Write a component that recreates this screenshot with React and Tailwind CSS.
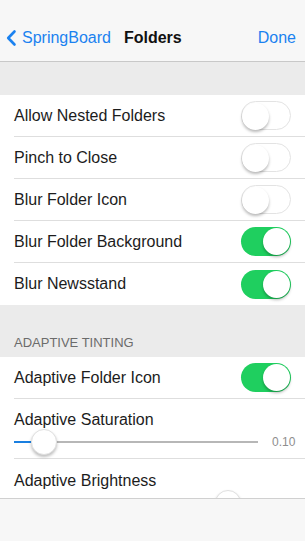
const font = { fontFamily: '"Liberation Sans", Arial, sans-serif' };

function Chevron() {
  return (
    <svg width="12" height="18" viewBox="0 0 12 18" className="shrink-0">
      <path
        d="M9.5 2.5 L3.2 9 L9.5 15.5"
        fill="none"
        stroke="#1b82f0"
        strokeWidth="2.6"
        strokeLinecap="round"
        strokeLinejoin="round"
      />
    </svg>
  );
}

function Toggle({ on }) {
  return (
    <div
      className={
        'relative h-[29px] w-[50px] shrink-0 rounded-full ' +
        (on ? 'bg-[#1fcf5f]' : 'border border-[#e3e3e3] bg-white')
      }
    >
      <div
        className={
          'absolute top-[1px] h-[27px] w-[27px] rounded-full bg-white shadow-[0_2px_3px_rgba(0,0,0,0.28)] ' +
          (on ? 'right-[1px]' : 'left-0 top-0')
        }
      />
    </div>
  );
}

function Row({ label, on, last }) {
  return (
    <div className="pl-[14px]">
      <div
        className={
          'flex h-[42px] items-center justify-between pr-[14px] ' +
          (last ? '' : 'border-b border-[#dedede]')
        }
      >
        <span className="text-[16px] text-[#1c1c1c]">{label}</span>
        <Toggle on={on} />
      </div>
    </div>
  );
}

function Slider({ pos, label }) {
  return (
    <div className="flex items-center pr-[11px]">
      <div className="relative h-[26px] flex-1">
        <div className="absolute left-0 right-0 top-[12px] h-[2px] bg-[#b7b7b7]" />
        <div
          className="absolute left-0 top-[12px] h-[2px] bg-[#1a7fe0]"
          style={{ width: pos }}
        />
        <div
          className="absolute top-0 h-[26px] w-[26px] rounded-full border border-[#e0e0e0] bg-white shadow-[0_2px_3px_rgba(0,0,0,0.25)]"
          style={{ left: pos - 13 }}
        />
      </div>
      {label && (
        <span className="ml-[14px] w-[22px] text-right text-[12px] text-[#8e8e8e]">{label}</span>
      )}
    </div>
  );
}

export default function App() {
  return (
    <div className="relative h-[541px] w-[305px] overflow-hidden bg-[#ebebeb]" style={font}>
      <div className="flex h-[62px] items-end border-b border-[#c8c8c8] bg-[#f7f7f7] pb-[11px]">
        <div className="flex w-full items-center">
          <div className="flex items-center pl-[5px] text-[#1b82f0]">
            <Chevron />
            <span className="ml-[5px] text-[16px]">SpringBoard</span>
          </div>
          <span className="ml-[13px] text-[16px] font-bold text-[#111]">Folders</span>
          <span className="ml-auto pr-[9px] text-[16px] text-[#1b82f0]">Done</span>
        </div>
      </div>

      <div className="h-[33px]" />

      <div className="bg-white">
        <Row label="Allow Nested Folders" />
        <Row label="Pinch to Close" />
        <Row label="Blur Folder Icon" />
        <Row label="Blur Folder Background" on />
        <Row label="Blur Newsstand" on last />
      </div>

      <div className="flex h-[52px] items-end pb-[5px] pl-[14px]">
        <span className="text-[13px] text-[#6b6b6b]">ADAPTIVE TINTING</span>
      </div>

      <div className="bg-white">
        <Row label="Adaptive Folder Icon" on />
        <div className="pl-[14px]">
          <div className="border-b border-[#dedede] pb-[3px] pt-[11px]">
            <div className="text-[16px] leading-[20px] text-[#1c1c1c]">Adaptive Saturation</div>
            <div className="mt-[-1px]">
              <Slider pos={30} label="0.10" />
            </div>
          </div>
        </div>
        <div className="pl-[14px]">
          <div className="pt-[12px]">
            <div className="text-[16px] leading-[20px] text-[#1c1c1c]">Adaptive Brightness</div>
            <div className="mt-[-1px] pr-[47px]">
              <Slider pos={214} />
            </div>
          </div>
        </div>
      </div>

      <div className="absolute bottom-0 left-0 right-0 h-[43px] border-t border-[#d0d0d0] bg-[#f7f7f7]" />
    </div>
  );
}
